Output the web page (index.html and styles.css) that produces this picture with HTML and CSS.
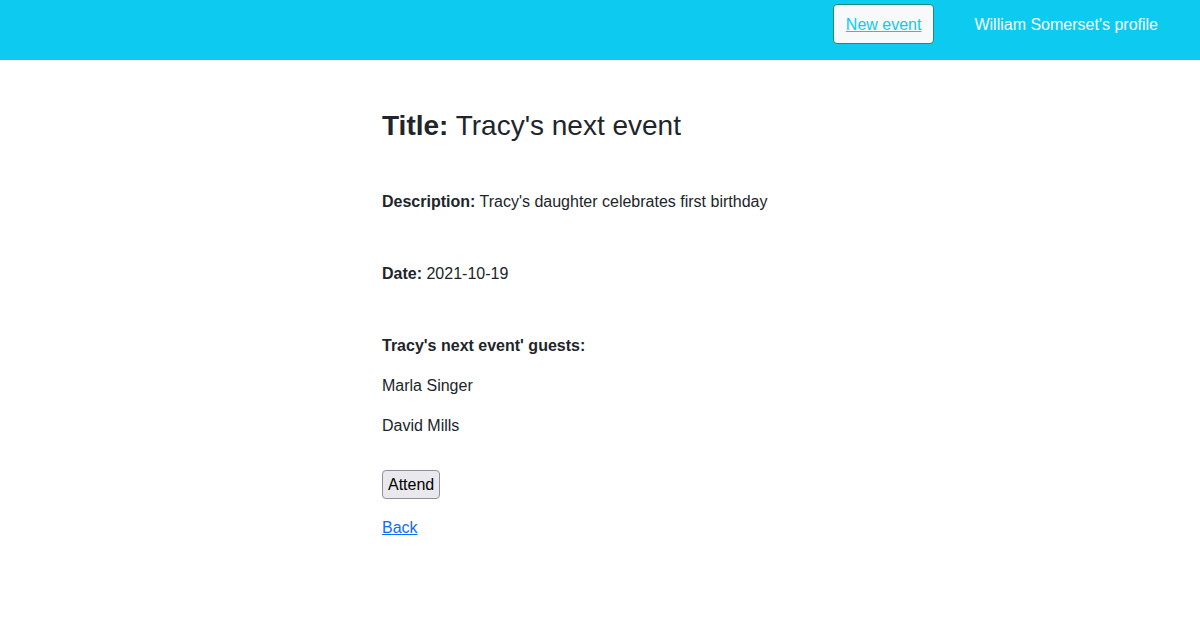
FILE: index.html
```html
<!DOCTYPE html>
<html lang="en">
<head>
<meta charset="utf-8">
<title>Tracy's next event</title>
<link rel="stylesheet" href="styles.css">
</head>
<body>
<nav class="navbar">
  <a class="btn-new" href="#">New event</a>
  <a class="profile" href="#">William Somerset's profile</a>
</nav>
<main class="content">
  <h3 class="title"><strong>Title:</strong> Tracy's next event</h3>
  <p class="section"><strong>Description:</strong> Tracy's daughter celebrates first birthday</p>
  <p class="section"><strong>Date:</strong> 2021-10-19</p>
  <div class="guests">
    <p class="guests-head"><strong>Tracy's next event' guests:</strong></p>
    <p class="guest">Marla Singer</p>
    <p class="guest">David Mills</p>
  </div>
  <button class="attend" type="button">Attend</button>
  <a class="back" href="#">Back</a>
</main>
</body>
</html>
```

FILE: styles.css
```css
* { box-sizing: border-box; }
html, body {
  margin: 0;
  padding: 0;
  background: #fff;
}
body {
  font-family: "Liberation Sans", Arial, sans-serif;
  font-size: 16px;
  line-height: 24px;
  color: #212529;
}
.navbar {
  height: 60px;
  background: #0dcaf0;
  display: flex;
  justify-content: flex-end;
  align-items: flex-start;
  padding: 4px 42px 0 0;
  gap: 40px;
}
.btn-new {
  display: block;
  padding: 8px 12px 6px;
  border: 1px solid #1b8f6e;
  border-radius: 4px;
  background: #f8f9fa;
  color: #0dcaf0;
  text-decoration: underline;
  line-height: 24px;
}
.profile {
  display: block;
  margin-top: 9px;
  color: #f8f9fa;
  text-decoration: none;
  line-height: 24px;
}
.content {
  width: 436px;
  margin: 0 auto;
  padding-top: 49px;
}
.title {
  margin: 0;
  font-size: 28px;
  line-height: 34px;
  font-weight: 400;
}
.title strong { font-weight: 700; }
.section {
  margin: 47px 0 0;
}
.section + .section { margin-top: 48px; }
.guests { margin-top: 48px; }
.guests p { margin: 0 0 16px; }
.attend {
  display: block;
  margin-top: 32px;
  font-family: "Liberation Sans", Arial, sans-serif;
  font-size: 16px;
  line-height: 23px;
  padding: 2px 5px;
  color: #000;
  background: #e9e9ed;
  border: 1px solid #8f8f9d;
  border-radius: 4px;
}
.back {
  display: inline-block;
  margin-top: 17px;
  color: #0d6efd;
  text-decoration: underline;
}
```
